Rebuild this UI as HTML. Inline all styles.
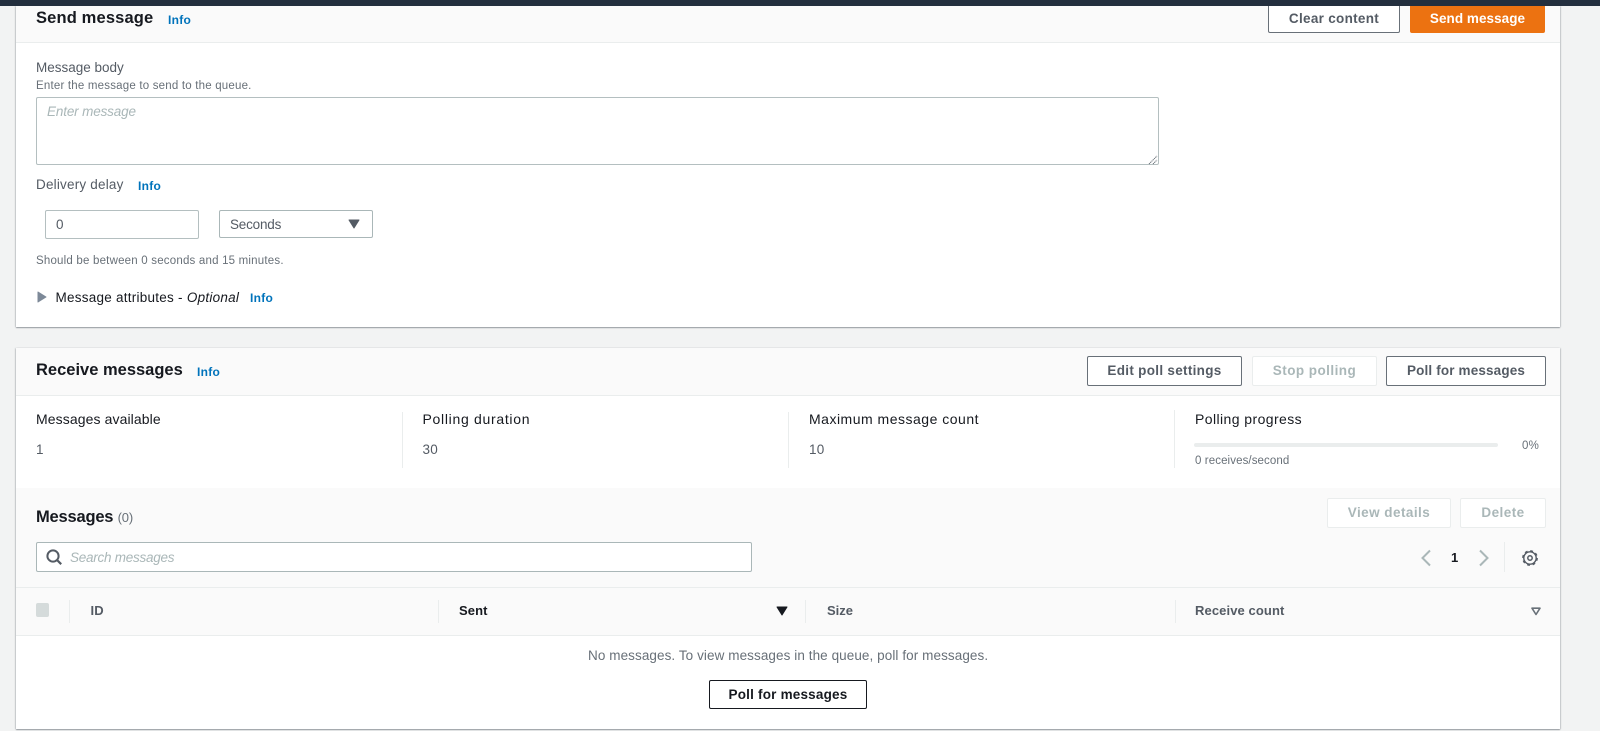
<!DOCTYPE html>
<html lang="en">
<head>
<meta charset="utf-8">
<title>Send and receive messages</title>
<style>
html,body{margin:0;padding:0;width:1600px;height:731px;overflow:hidden;background:#f2f3f3;font-family:"Liberation Sans",sans-serif;color:#16191f}
.a{position:absolute;box-sizing:border-box}
.t{position:absolute;white-space:nowrap;height:20px;line-height:20px}
.panel{background:#fff;box-shadow:0 1px 1px rgba(84,91,100,.55),1px 0 1px rgba(84,91,100,.2),-1px 0 1px rgba(84,91,100,.2)}
.hd{background:#fafafa}
.h2{font-size:16.5px;font-weight:700;color:#16191f}
.info{font-size:12px;font-weight:700;color:#0073bb;letter-spacing:.3px}
.lb{font-size:14px;color:#16191f}
.lb2{font-size:13.5px;color:#545b64;letter-spacing:.2px}
.sm{font-size:11.5px;color:#687078;letter-spacing:.2px}
.btn{position:absolute;box-sizing:border-box;background:#fff;border:1px solid #687078;border-radius:2px;font-size:13.5px;font-weight:700;color:#545b64;text-align:center;letter-spacing:.3px;white-space:nowrap}
.btn.dark{color:#16191f}
.btn.off{border-color:#eaeded;color:#aab7b8;letter-spacing:.45px}
.line{position:absolute;background:#eaeded}
.th{font-size:13px;font-weight:700;color:#545b64;letter-spacing:.1px}
.fld{background:#fff;border:1px solid #b4bfc0;border-radius:2px}
</style>
</head>
<body>
<div class="a" style="left:0;top:0;width:1600px;height:6px;background:#232f3e"></div>

<!-- Send panel -->
<div class="a panel" style="left:16px;top:6px;width:1544px;height:321px"></div>
<div class="a hd" style="left:16px;top:6px;width:1544px;height:37px;border-bottom:1px solid #eaeded"></div>
<div class="t h2" style="left:36px;top:8px;letter-spacing:.15px">Send message</div>
<div class="t info" style="left:168px;top:10px">Info</div>
<div class="btn" style="left:1268px;top:4px;width:132px;height:29px;line-height:28px">Clear content</div>
<div class="btn" style="left:1410px;top:4px;width:135px;height:29px;line-height:28px;background:#ec7211;border-color:#ec7211;color:#fff;letter-spacing:.05px">Send message</div>
<div class="a" style="left:0;top:0;width:1600px;height:6px;background:#232f3e"></div>

<div class="t lb2" style="left:36px;top:58px;letter-spacing:0">Message body</div>
<div class="t sm" style="left:36px;top:76px">Enter the message to send to the queue.</div>
<div class="a fld" style="left:36px;top:97px;width:1123px;height:68px"></div>
<div class="t" style="left:47px;top:102px;font-size:13.5px;font-style:italic;color:#aab7b8;letter-spacing:-.15px">Enter message</div>
<svg class="a" style="left:1148px;top:155px" width="10" height="10" viewBox="0 0 10 10"><path d="M1 9L9 1M5 9L9 5" stroke="#687078" stroke-width="1" fill="none" stroke-dasharray="1.2 .6"/></svg>

<div class="t lb2" style="left:36px;top:175px">Delivery delay</div>
<div class="t info" style="left:138px;top:176px">Info</div>
<div class="a fld" style="left:45px;top:210px;width:154px;height:29px"></div>
<div class="t lb2" style="left:56px;top:215px">0</div>
<div class="a" style="left:219px;top:210px;width:154px;height:28px;background:#fff;border:1px solid #aab7b8;border-radius:2px"></div>
<div class="t lb2" style="left:230px;top:215px;letter-spacing:-.2px">Seconds</div>
<svg class="a" style="left:348px;top:219px" width="12" height="10" viewBox="0 0 12 10"><path d="M1 1H11L6 9Z" fill="#545b64" stroke="#545b64" stroke-linejoin="round"/></svg>
<div class="t sm" style="left:36px;top:251px">Should be between 0 seconds and 15 minutes.</div>
<svg class="a" style="left:37px;top:291px" width="10" height="12" viewBox="0 0 10 12"><path d="M1 1L9 6L1 11Z" fill="#7d8998" stroke="#7d8998" stroke-linejoin="round"/></svg>
<div class="t lb2" style="left:55.5px;top:288px;color:#16191f;letter-spacing:.25px">Message attributes - <i>Optional</i></div>
<div class="t info" style="left:250px;top:288px">Info</div>

<!-- Receive panel -->
<div class="a panel" style="left:16px;top:348px;width:1544px;height:381px"></div>
<div class="a hd" style="left:16px;top:348px;width:1544px;height:48px;border-bottom:1px solid #eaeded"></div>
<div class="t h2" style="left:36px;top:360px">Receive messages</div>
<div class="t info" style="left:197px;top:362px">Info</div>
<div class="btn" style="left:1087px;top:356px;width:155px;height:30px;line-height:28px">Edit poll settings</div>
<div class="btn off" style="left:1252px;top:356px;width:125px;height:30px;line-height:28px">Stop polling</div>
<div class="btn" style="left:1386px;top:356px;width:160px;height:30px;line-height:28px;letter-spacing:.15px">Poll for messages</div>

<div class="t lb" style="left:36px;top:409px;letter-spacing:.1px">Messages available</div>
<div class="t lb2" style="left:36px;top:440px">1</div>
<div class="line" style="left:402px;top:412px;width:1px;height:56px"></div>
<div class="t lb" style="left:422.5px;top:409px;letter-spacing:.7px">Polling duration</div>
<div class="t lb2" style="left:422.5px;top:440px">30</div>
<div class="line" style="left:788px;top:412px;width:1px;height:56px"></div>
<div class="t lb" style="left:809px;top:409px;letter-spacing:.5px">Maximum message count</div>
<div class="t lb2" style="left:809px;top:440px">10</div>
<div class="line" style="left:1174px;top:410px;width:1px;height:58px"></div>
<div class="t lb" style="left:1195px;top:409px;letter-spacing:.42px">Polling progress</div>
<div class="a" style="left:1194px;top:443px;width:304px;height:4px;background:#eaeded;border-radius:2px"></div>
<div class="t sm" style="left:1522px;top:436px">0%</div>
<div class="t sm" style="left:1195px;top:451px;letter-spacing:.1px">0 receives/second</div>

<div class="a hd" style="left:16px;top:488px;width:1544px;height:148px;border-bottom:1px solid #eaeded"></div>
<div class="line" style="left:16px;top:587px;width:1544px;height:1px"></div>
<div class="t" style="left:36px;top:507px;font-size:16.5px;font-weight:700;letter-spacing:-.2px">Messages <span style="font-size:13px;font-weight:400;color:#687078">(0)</span></div>
<div class="btn off" style="left:1327px;top:498px;width:124px;height:30px;line-height:28px">View details</div>
<div class="btn off" style="left:1460px;top:498px;width:86px;height:30px;line-height:28px">Delete</div>

<div class="a fld" style="left:36px;top:542px;width:716px;height:30px;border-color:#aab7b8"></div>
<svg class="a" style="left:45px;top:548px" width="18" height="18" viewBox="0 0 18 18"><circle cx="8" cy="8" r="5.6" fill="none" stroke="#545b64" stroke-width="2"/><path d="M12 12L16.2 16.2" stroke="#545b64" stroke-width="2.2"/></svg>
<div class="t" style="left:70px;top:548px;font-size:13.5px;font-style:italic;color:#aab7b8;letter-spacing:-.25px">Search messages</div>

<svg class="a" style="left:1419px;top:548px" width="14" height="20" viewBox="0 0 14 20"><path d="M11 2.5L3.5 10L11 17.5" fill="none" stroke="#aab7b8" stroke-width="2"/></svg>
<div class="t" style="left:1451px;top:548px;font-size:13px;font-weight:700;color:#16191f">1</div>
<svg class="a" style="left:1477px;top:548px" width="14" height="20" viewBox="0 0 14 20"><path d="M3 2.5L10.5 10L3 17.5" fill="none" stroke="#aab7b8" stroke-width="2"/></svg>
<div class="line" style="left:1504px;top:542px;width:1px;height:30px"></div>
<svg class="a" style="left:1521px;top:549px" width="18" height="18" viewBox="0 0 18 18"><circle cx="9" cy="9" r="6.2" fill="none" stroke="#545b64" stroke-width="1.4"/><circle cx="9" cy="9" r="7.2" fill="none" stroke="#545b64" stroke-width="1.4" stroke-dasharray="2.83 2.83"/><circle cx="9" cy="9" r="2.2" fill="none" stroke="#545b64" stroke-width="1.5"/></svg>

<div class="a" style="left:36px;top:603px;width:13px;height:14px;background:#d5dbdb;border-radius:2px"></div>
<div class="line" style="left:69px;top:600px;width:1px;height:23px"></div>
<div class="t th" style="left:90.5px;top:601px">ID</div>
<div class="line" style="left:438px;top:600px;width:1px;height:23px"></div>
<div class="t th" style="left:459px;top:601px;color:#16191f">Sent</div>
<svg class="a" style="left:776px;top:606px" width="12" height="10" viewBox="0 0 12 10"><path d="M1 1H11L6 9Z" fill="#16191f" stroke="#16191f" stroke-linejoin="round"/></svg>
<div class="line" style="left:805px;top:600px;width:1px;height:23px"></div>
<div class="t th" style="left:827px;top:601px;letter-spacing:0">Size</div>
<div class="line" style="left:1175px;top:600px;width:1px;height:23px"></div>
<div class="t th" style="left:1195px;top:601px">Receive count</div>
<svg class="a" style="left:1531px;top:607px" width="10" height="9" viewBox="0 0 10 9"><path d="M1 1.2H9L5 7.5Z" fill="none" stroke="#687078" stroke-width="1.6" stroke-linejoin="round"/></svg>

<div class="t lb2" style="left:588px;top:646px;color:#687078;letter-spacing:.08px">No messages. To view messages in the queue, poll for messages.</div>
<div class="btn dark" style="left:709px;top:680px;width:158px;height:29px;line-height:28px;border-color:#16191f;letter-spacing:.2px">Poll for messages</div>
</body>
</html>
